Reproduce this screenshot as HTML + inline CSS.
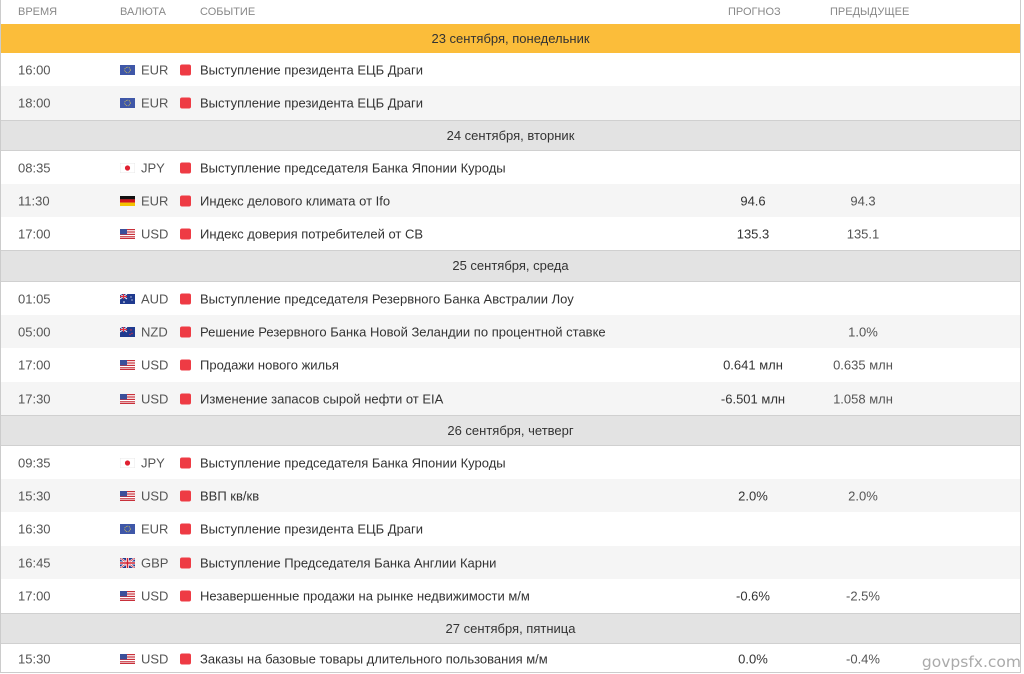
<!DOCTYPE html>
<html><head><meta charset="utf-8">
<style>
*{margin:0;padding:0;box-sizing:border-box}
body{width:1024px;height:674px;overflow:hidden;background:#fff;font-family:"Liberation Sans","DejaVu Sans",sans-serif;font-size:13px;color:#333;position:relative}
.frame{position:absolute;left:0;top:0;width:1021px;height:673px;border-left:1px solid #ccc;border-right:1px solid #ccc;border-bottom:1px solid #ccc}
.r{position:absolute;left:1px;width:1019px}
.hd{top:0;height:24px;color:#888;font-size:11px}
.hd span{position:absolute;top:6px}
.y{background:#fbbd3a;text-align:center;color:#333}
.g{background:#e3e3e3;text-align:center;border-top:1px solid #d0d0d0;border-bottom:1px solid #d0d0d0}
.d.alt{background:#f5f5f5}
.c{position:absolute;top:50%;transform:translateY(-50%);white-space:nowrap}
.t{left:17px;color:#555}
.f{left:119px;width:15px;height:10px;transform:translateY(-50%)}
.cur{left:140px;color:#555}
.sq{left:179px;width:11px;height:11px;background:#ee3b44;border-radius:2px}
.ev{left:199px;color:#333}
.fc{left:700px;width:104px;text-align:center;color:#333}
.pv{left:810px;width:104px;text-align:center;color:#555}
.wm{position:absolute;right:3px;bottom:3px;font-size:15.5px;color:#aaa;font-family:"DejaVu Sans","Liberation Sans",sans-serif}
</style></head><body>
<svg width="0" height="0" style="position:absolute">
<defs>
<symbol id="eu" viewBox="0 0 15 10"><rect width="15" height="10" fill="#3f57a8"/><circle cx="7.5" cy="5" r="2.8" fill="none" stroke="#e8d24a" stroke-width="0.8" stroke-dasharray="0.8 0.8"/></symbol>
<symbol id="jp" viewBox="0 0 15 10"><rect width="15" height="10" fill="#fff" stroke="#ddd" stroke-width="0.6"/><circle cx="7.5" cy="5" r="2.6" fill="#e02030"/></symbol>
<symbol id="de" viewBox="0 0 15 10"><rect width="15" height="3.4" fill="#111"/><rect y="3.3" width="15" height="3.4" fill="#d4151b"/><rect y="6.6" width="15" height="3.4" fill="#f4c300"/></symbol>
<symbol id="us" viewBox="0 0 15 10"><rect width="15" height="10" fill="#fff"/><g fill="#c8303a"><rect width="15" height="1.2"/><rect y="2.4" width="15" height="1.2"/><rect y="4.8" width="15" height="1.2"/><rect y="7.2" width="15" height="1.2"/><rect y="9" width="15" height="1"/></g><rect width="7" height="5.4" fill="#3b4f9a"/></symbol>
<symbol id="au" viewBox="0 0 15 10"><rect width="15" height="10" fill="#1f3a8f"/><path d="M0 0L7 5M7 0L0 5" stroke="#fff" stroke-width="1"/><path d="M3.5 0V5M0 2.5H7" stroke="#e03040" stroke-width="1.2"/><circle cx="11" cy="3" r=".6" fill="#fff"/><circle cx="12" cy="6" r=".6" fill="#fff"/><circle cx="4" cy="8" r=".8" fill="#fff"/></symbol>
<symbol id="nz" viewBox="0 0 15 10"><rect width="15" height="10" fill="#1f3a8f"/><path d="M0 0L7 5M7 0L0 5" stroke="#fff" stroke-width="1"/><path d="M3.5 0V5M0 2.5H7" stroke="#e03040" stroke-width="1.2"/><circle cx="11" cy="3" r=".7" fill="#e03040"/><circle cx="12" cy="6.5" r=".7" fill="#e03040"/><circle cx="10" cy="7.5" r=".7" fill="#e03040"/></symbol>
<symbol id="gb" viewBox="0 0 15 10"><rect width="15" height="10" fill="#1f3a8f"/><path d="M0 0L15 10M15 0L0 10" stroke="#fff" stroke-width="2"/><path d="M0 0L15 10M15 0L0 10" stroke="#d02030" stroke-width=".7"/><path d="M7.5 0V10M0 5H15" stroke="#fff" stroke-width="3"/><path d="M7.5 0V10M0 5H15" stroke="#d02030" stroke-width="1.6"/></symbol>
</defs></svg>
<div class="frame"></div>
<div class="r hd"><span style="left:17px">ВРЕМЯ</span><span style="left:119px">ВАЛЮТА</span><span style="left:199px">СОБЫТИЕ</span><span style="left:727px">ПРОГНОЗ</span><span style="left:829px">ПРЕДЫДУЩЕЕ</span></div>

<div class="r y" style="top:24px;height:29px;line-height:29px">23 сентября, понедельник</div>
<div class="r d" style="top:53px;height:33px"><span class="c t">16:00</span><svg class="c f"><use href="#eu"/></svg><span class="c cur">EUR</span><span class="c sq"></span><span class="c ev">Выступление президента ЕЦБ Драги</span></div>
<div class="r d alt" style="top:86px;height:34px"><span class="c t">18:00</span><svg class="c f"><use href="#eu"/></svg><span class="c cur">EUR</span><span class="c sq"></span><span class="c ev">Выступление президента ЕЦБ Драги</span></div>

<div class="r g" style="top:120px;height:31px;line-height:29px">24 сентября, вторник</div>
<div class="r d" style="top:151px;height:33px"><span class="c t">08:35</span><svg class="c f"><use href="#jp"/></svg><span class="c cur">JPY</span><span class="c sq"></span><span class="c ev">Выступление председателя Банка Японии Куроды</span></div>
<div class="r d alt" style="top:184px;height:33px"><span class="c t">11:30</span><svg class="c f"><use href="#de"/></svg><span class="c cur">EUR</span><span class="c sq"></span><span class="c ev">Индекс делового климата от Ifo</span><span class="c fc">94.6</span><span class="c pv">94.3</span></div>
<div class="r d" style="top:217px;height:33px"><span class="c t">17:00</span><svg class="c f"><use href="#us"/></svg><span class="c cur">USD</span><span class="c sq"></span><span class="c ev">Индекс доверия потребителей от CB</span><span class="c fc">135.3</span><span class="c pv">135.1</span></div>

<div class="r g" style="top:250px;height:32px;line-height:30px">25 сентября, среда</div>
<div class="r d" style="top:282px;height:33px"><span class="c t">01:05</span><svg class="c f"><use href="#au"/></svg><span class="c cur">AUD</span><span class="c sq"></span><span class="c ev">Выступление председателя Резервного Банка Австралии Лоу</span></div>
<div class="r d alt" style="top:315px;height:33px"><span class="c t">05:00</span><svg class="c f"><use href="#nz"/></svg><span class="c cur">NZD</span><span class="c sq"></span><span class="c ev">Решение Резервного Банка Новой Зеландии по процентной ставке</span><span class="c pv">1.0%</span></div>
<div class="r d" style="top:348px;height:34px"><span class="c t">17:00</span><svg class="c f"><use href="#us"/></svg><span class="c cur">USD</span><span class="c sq"></span><span class="c ev">Продажи нового жилья</span><span class="c fc">0.641 млн</span><span class="c pv">0.635 млн</span></div>
<div class="r d alt" style="top:382px;height:33px"><span class="c t">17:30</span><svg class="c f"><use href="#us"/></svg><span class="c cur">USD</span><span class="c sq"></span><span class="c ev">Изменение запасов сырой нефти от EIA</span><span class="c fc">-6.501 млн</span><span class="c pv">1.058 млн</span></div>

<div class="r g" style="top:415px;height:31px;line-height:29px">26 сентября, четверг</div>
<div class="r d" style="top:446px;height:33px"><span class="c t">09:35</span><svg class="c f"><use href="#jp"/></svg><span class="c cur">JPY</span><span class="c sq"></span><span class="c ev">Выступление председателя Банка Японии Куроды</span></div>
<div class="r d alt" style="top:479px;height:33px"><span class="c t">15:30</span><svg class="c f"><use href="#us"/></svg><span class="c cur">USD</span><span class="c sq"></span><span class="c ev">ВВП кв/кв</span><span class="c fc">2.0%</span><span class="c pv">2.0%</span></div>
<div class="r d" style="top:512px;height:34px"><span class="c t">16:30</span><svg class="c f"><use href="#eu"/></svg><span class="c cur">EUR</span><span class="c sq"></span><span class="c ev">Выступление президента ЕЦБ Драги</span></div>
<div class="r d alt" style="top:546px;height:33px"><span class="c t">16:45</span><svg class="c f"><use href="#gb"/></svg><span class="c cur">GBP</span><span class="c sq"></span><span class="c ev">Выступление Председателя Банка Англии Карни</span></div>
<div class="r d" style="top:579px;height:34px"><span class="c t">17:00</span><svg class="c f"><use href="#us"/></svg><span class="c cur">USD</span><span class="c sq"></span><span class="c ev">Незавершенные продажи на рынке недвижимости м/м</span><span class="c fc">-0.6%</span><span class="c pv">-2.5%</span></div>

<div class="r g" style="top:613px;height:31px;line-height:29px">27 сентября, пятница</div>
<div class="r d" style="top:644px;height:29px"><span class="c t">15:30</span><svg class="c f"><use href="#us"/></svg><span class="c cur">USD</span><span class="c sq"></span><span class="c ev">Заказы на базовые товары длительного пользования м/м</span><span class="c fc">0.0%</span><span class="c pv">-0.4%</span></div>
<div class="wm">govpsfx.com</div>
</body></html>
